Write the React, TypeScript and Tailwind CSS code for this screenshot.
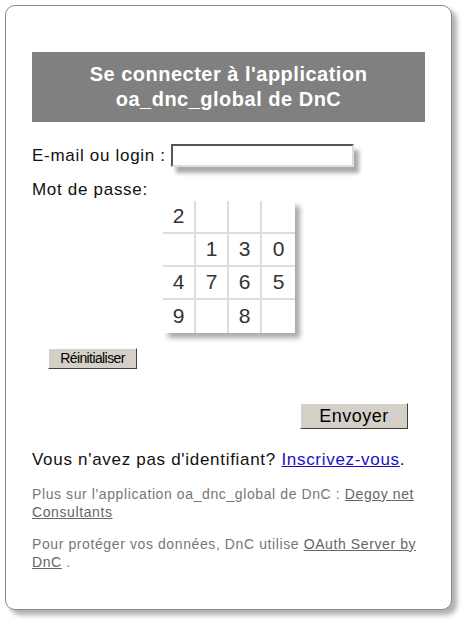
const keypad = ["2", "", "", "", "", "1", "3", "0", "4", "7", "6", "5", "9", "", "8", ""];

export default function App() {
  return (
    <div className="w-[467px] h-[622px] bg-white pt-[5px] pl-[5px] font-['Century_Gothic','Liberation_Sans',sans-serif]">
      <div className="w-[447px] h-[605px] rounded-[10px] border border-[#8a8a8a] bg-white shadow-[5px_5px_5px_#b0b0b0] px-[26px] pt-[46px]">
        {/* Header */}
        <div className="bg-[#808080] h-[70px] flex flex-col items-center justify-center text-white font-bold text-[20px] tracking-[0.5px] leading-[25px]">
          <div>Se connecter à l'application</div>
          <div>oa_dnc_global de DnC</div>
        </div>

        <div className="mt-[21px] flex items-center text-[17px] tracking-[0.7px] text-[#111]">
          <span>E-mail ou login :</span>
          <input
            type="text"
            className="ml-[5px] w-[183px] h-[23px] bg-white border-2 border-t-[#555] border-l-[#555] border-b-[#ddd] border-r-[#ddd] shadow-[5px_6px_4px_#aaa] outline-none"
          />
        </div>

        <div className="mt-[11px] text-[17px] tracking-[0.7px] text-[#111] leading-[20px]">Mot de passe:</div>

        <div className="ml-[131px] mt-[1px] w-[132px] grid grid-cols-4 bg-white shadow-[5px_5px_5px_#aaa] font-['Liberation_Sans',Arial,sans-serif]">
          {keypad.map((k, i) => (
            <div
              key={i}
              className={`h-[33px] flex items-center justify-center text-[21px] text-[#333] border-[#ddd] ${
                i % 4 !== 3 ? "border-r-2" : ""
              } ${i < 12 ? "border-b-2" : ""}`}
            >
              {k}
            </div>
          ))}
        </div>

        <button className="mt-[15px] ml-[16px] w-[89px] h-[21px] bg-[#d4d0c8] border border-t-white border-l-white border-b-[#404040] border-r-[#404040] text-[14px] tracking-[-0.6px] text-black font-['Liberation_Sans',sans-serif] leading-none">
          Réinitialiser
        </button>

        <div className="flex justify-end mt-[33px] pr-[17px]">
          <button className="w-[108px] h-[26px] bg-[#d4d0c8] border border-t-white border-l-white border-b-[#404040] border-r-[#404040] text-[18px] tracking-[0.5px] text-black leading-none">
            Envoyer
          </button>
        </div>

        <div className="mt-[18px] text-[17px] tracking-[0.7px] text-[#111]">
          Vous n'avez pas d'identifiant?{" "}
          <a href="#" className="text-[#1a0dcc] underline">Inscrivez-vous</a>.
        </div>

        <div className="mt-[12px] text-[14px] tracking-[0.6px] leading-[18px] text-[#777]">
          Plus sur l'application oa_dnc_global de DnC :{" "}
          <a href="#" className="underline text-[#666]">Degoy net Consultants</a>
        </div>

        <div className="mt-[14px] text-[14px] tracking-[0.6px] leading-[18px] text-[#777]">
          Pour protéger vos données, DnC utilise{" "}
          <a href="#" className="underline text-[#666]">OAuth Server by DnC</a> .
        </div>
      </div>
    </div>
  );
}
